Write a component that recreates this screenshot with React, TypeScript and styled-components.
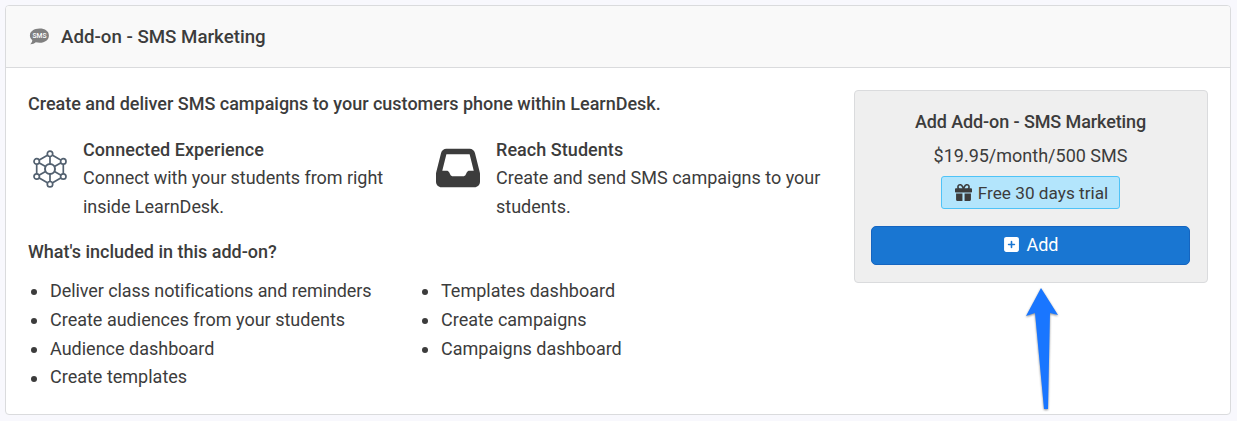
import React from 'react';
import styled, { createGlobalStyle } from 'styled-components';
import { FaInbox, FaGift, FaSquarePlus } from 'react-icons/fa6';

const GlobalStyle = createGlobalStyle`
  * { box-sizing: border-box; }
  body {
    margin: 0;
    background: #f8f8fd;
    color: #3c3c3c;
    font: 400 18px/28.8px Roboto, "Liberation Sans", sans-serif;
  }
`;

const Page = styled.div`
  position: relative;
  height: 421px;
  padding: 5px 6px 6px 5px;
  overflow: hidden;
`;

const Card = styled.section`
  height: 410px;
  background: #fff;
  border: 1px solid #dadbdd;
  border-radius: 4px;
  overflow: hidden;
`;

const CardHeader = styled.header`
  display: flex;
  align-items: center;
  gap: 12px;
  height: 62px;
  padding: 0 23px;
  background: #f9f9f9;
  border-bottom: 1px solid #dadbdd;
`;

const Title = styled.h1`
  margin: 0;
  padding-top: 1px;
  font-size: 18.7px;
  font-weight: 500;
`;

const CardBody = styled.div`
  display: flex;
  justify-content: space-between;
  padding: 22px 22px 0;
`;

const Details = styled.div`
  width: 826px;
`;

const Subheading = styled.h2`
  margin: 0;
  font-size: 18px;
  line-height: 28px;
  font-weight: 500;
  letter-spacing: -0.01px;
`;

const OfferTitle = styled(Subheading)`
  letter-spacing: -0.1px;
`;

const FeatureRow = styled.div`
  display: grid;
  grid-template-columns: 408px 418px;
  margin: 18px 0 16px;
`;

const Feature = styled.div`
  display: flex;
`;

const FeatureIcon = styled.div<{ $width: number; $left?: number; $top: number }>`
  display: flex;
  flex: none;
  width: ${(p) => p.$width}px;
  padding: ${(p) => p.$top}px 0 0 ${(p) => p.$left ?? 0}px;
`;

const FeatureName = styled.h3`
  margin: 0;
  font-size: 18px;
  font-weight: 500;
  line-height: 28px;
  letter-spacing: 0.05px;
`;

const FeatureText = styled.p<{ $width: number; $spacing?: number }>`
  width: ${(p) => p.$width}px;
  margin: 0;
  letter-spacing: ${(p) => p.$spacing ?? 0}px;
`;

const IncludedLists = styled.div`
  display: grid;
  grid-template-columns: 391px 391px;
  margin-top: 11.4px;
`;

const List = styled.ul`
  margin: 0;
  padding: 0 0 0 22px;
`;

const Item = styled.li<{ $spacing: number }>`
  display: flex;
  align-items: center;
  height: 28.8px;
  margin-left: -19px;
  letter-spacing: ${(p) => p.$spacing}px;

  &::before {
    content: '';
    width: 6px;
    height: 6px;
    margin: 2px 13px 0 0;
    border-radius: 50%;
    background: currentColor;
  }
`;

const Offer = styled.aside`
  display: flex;
  flex-direction: column;
  align-items: center;
  width: 354px;
  height: 193px;
  padding: 17px 17px 17px 16px;
  background: #efefef;
  border: 1px solid #dadbdd;
  border-radius: 4px;
`;

const Price = styled.p`
  margin: 6px 0 5px;
`;

const TrialBadge = styled.div`
  display: flex;
  align-items: center;
  justify-content: center;
  gap: 6px;
  width: 179px;
  height: 33px;
  padding: 2px 0 0 2px;
  background: #b3e5fc;
  border: 1px solid #4fc3f7;
  border-radius: 3px;
  font-size: 17.2px;

  svg {
    margin-top: -2px;
  }
`;

const AddButton = styled.button`
  display: flex;
  align-items: center;
  justify-content: center;
  gap: 7px;
  width: 319px;
  height: 39px;
  margin-top: 17px;
  padding: 0;
  color: #fff;
  background: #1976d2;
  border: 1px solid #1565c0;
  border-radius: 5px;
  font: inherit;

  svg {
    margin: -2px -1px 0 1px;
  }
`;

const Pointer = styled.svg`
  position: absolute;
  left: 1021px;
  top: 283px;
  filter: drop-shadow(0 1px 1px rgba(0, 0, 0, 0.45));
`;

const SmsIcon = () => (
  <svg width="20" height="17" viewBox="-0.6 0 20 17">
    <path
      d="M10 .5C4.400.5.300 3.300.300 7.300c0 2 .8 3.600 2.400 4.900C2.600 13.900 1.600 15 .6 16.300c2.200.1 4.200-.8 5.600-2 1.200.3 2.500.5 3.800.5 5.600 0 9.300-3 9.300-7.300S15.600.5 10 .5z"
      fill="#808080"
    />
    <text
      x="9.900"
      y="9.800"
      textAnchor="middle"
      fontFamily="Roboto, sans-serif"
      fontSize="6.500"
      fontWeight="500"
      textLength="14"
      lengthAdjust="spacingAndGlyphs"
      fill="#fff"
    >
      SMS
    </text>
  </svg>
);

const outerNodes = [
  [18, 3.8],
  [31.3, 11.4],
  [31.3, 26.5],
  [18, 34.2],
  [4.7, 26.5],
  [4.7, 11.4],
];

const NetworkIcon = () => (
  <svg width="36" height="38" viewBox="0 0 36 38" fill="none" stroke="#536170" strokeWidth="1.700">
    <polygon points={outerNodes.map((n) => n.join(',')).join(' ')} />
    {outerNodes.map(([x, y]) => (
      <line key={`${x}-${y}`} x1="18" y1="19" x2={x} y2={y} />
    ))}
    <circle cx="18" cy="19" r="5" fill="#fff" strokeWidth="2" />
    {outerNodes.map(([x, y]) => (
      <circle key={`${x}-${y}`} cx={x} cy={y} r="2.700" fill="#fff" />
    ))}
  </svg>
);

const included = [
  [
    'Deliver class notifications and reminders',
    'Create audiences from your students',
    'Audience dashboard',
    'Create templates',
  ],
  ['Templates dashboard', 'Create campaigns', 'Campaigns dashboard'],
];

export default function App() {
  return (
    <Page>
      <GlobalStyle />
      <Card>
        <CardHeader>
          <SmsIcon />
          <Title>Add-on - SMS Marketing</Title>
        </CardHeader>
        <CardBody>
          <Details>
            <Subheading>Create and deliver SMS campaigns to your customers phone within LearnDesk.</Subheading>
            <FeatureRow>
              <Feature>
                <FeatureIcon $width={55} $left={4} $top={14}>
                  <NetworkIcon />
                </FeatureIcon>
                <div>
                  <FeatureName>Connected Experience</FeatureName>
                  <FeatureText $width={310} $spacing={-0.05}>
                    Connect with your students from right inside LearnDesk.
                  </FeatureText>
                </div>
              </Feature>
              <Feature>
                <FeatureIcon $width={60} $top={10}>
                  <FaInbox size={44} />
                </FeatureIcon>
                <div>
                  <FeatureName>Reach Students</FeatureName>
                  <FeatureText $width={340}>Create and send SMS campaigns to your students.</FeatureText>
                </div>
              </Feature>
            </FeatureRow>
            <Subheading>What's included in this add-on?</Subheading>
            <IncludedLists>
              {included.map((items) => (
                <List key={items[0]}>
                  {items.map((item) => (
                    <Item key={item} $spacing={item.length > 40 ? -0.085 : 0}>
                      {item}
                    </Item>
                  ))}
                </List>
              ))}
            </IncludedLists>
          </Details>
          <Offer>
            <OfferTitle>Add Add-on - SMS Marketing</OfferTitle>
            <Price>$19.95/month/500 SMS</Price>
            <TrialBadge>
              <FaGift size={17} />
              Free 30 days trial
            </TrialBadge>
            <AddButton>
              <FaSquarePlus size={17} />
              Add
            </AddButton>
          </Offer>
        </CardBody>
      </Card>
      <Pointer width="42" height="132" viewBox="0 0 42 132">
        <path d="M20 5 37 32 29 30 27 126H23L14 30 5 33Z" fill="#1976ff" />
      </Pointer>
    </Page>
  );
}
